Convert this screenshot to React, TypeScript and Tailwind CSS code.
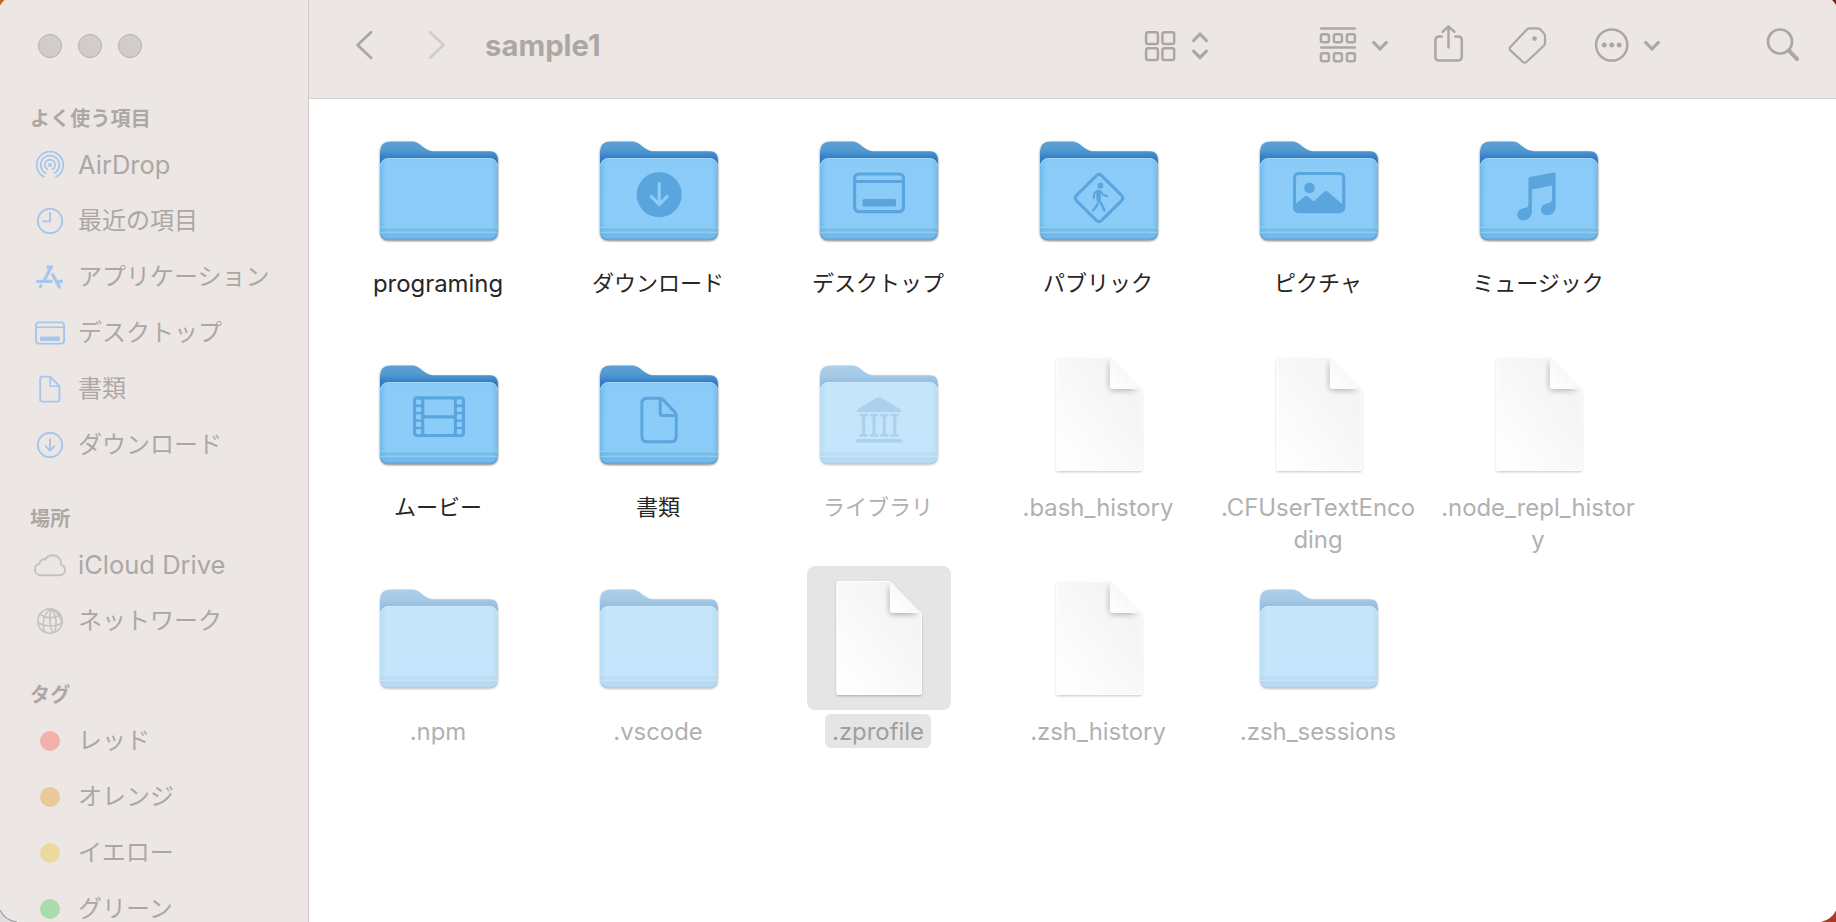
import React from "react";

type Glyph =
  | "none" | "download" | "desktop" | "public" | "pictures"
  | "music" | "movies" | "documents" | "library";

type Entry = {
  kind: "folder" | "file";
  lines: string[];
  glyph?: Glyph;
  hidden?: boolean;
  selected?: boolean;
  latin?: boolean;
};

const entries: Entry[] = [
  { kind: "folder", lines: ["programing"], latin: true },
  { kind: "folder", lines: ["ダウンロード"], glyph: "download" },
  { kind: "folder", lines: ["デスクトップ"], glyph: "desktop" },
  { kind: "folder", lines: ["パブリック"], glyph: "public" },
  { kind: "folder", lines: ["ピクチャ"], glyph: "pictures" },
  { kind: "folder", lines: ["ミュージック"], glyph: "music" },
  { kind: "folder", lines: ["ムービー"], glyph: "movies" },
  { kind: "folder", lines: ["書類"], glyph: "documents" },
  { kind: "folder", lines: ["ライブラリ"], glyph: "library", hidden: true },
  { kind: "file", lines: [".bash_history"], hidden: true, latin: true },
  { kind: "file", lines: [".CFUserTextEnco", "ding"], hidden: true, latin: true },
  { kind: "file", lines: [".node_repl_histor", "y"], hidden: true, latin: true },
  { kind: "folder", lines: [".npm"], hidden: true, latin: true },
  { kind: "folder", lines: [".vscode"], hidden: true, latin: true },
  { kind: "file", lines: [".zprofile"], hidden: true, selected: true, latin: true },
  { kind: "file", lines: [".zsh_history"], hidden: true, latin: true },
  { kind: "folder", lines: [".zsh_sessions"], hidden: true, latin: true },
];

const INK = "#5ba5df";
const FACE = "#8bcdf8";

function FolderGlyph({ glyph }: { glyph: Glyph }) {
  switch (glyph) {
    case "download":
      return (
        <g>
          <circle cx="72.2" cy="76.7" r="22.6" fill={INK} />
          <path d="M72.2 65.5V86.5M64.3 78.5L72.2 86.7L80.1 78.5" fill="none" stroke={FACE} strokeWidth="3.2" strokeLinecap="round" strokeLinejoin="round" />
        </g>
      );
    case "desktop":
      return (
        <g fill="none" stroke={INK} strokeWidth="3.2">
          <rect x="47.6" y="56" width="48.8" height="37.6" rx="4" />
          <path d="M48 63.5H96" strokeWidth="3" />
          <rect x="55.5" y="81" width="33.5" height="7.4" rx="1.5" fill={INK} stroke="none" />
        </g>
      );
    case "public":
      return (
        <g fill="none" stroke={INK} strokeLinecap="round" strokeLinejoin="round">
          <path d="M69.4 57.6Q72 55.2 74.6 57.6L94.6 77.4Q97 80 94.6 82.6L74.6 102.4Q72 104.8 69.4 102.4L49.4 82.6Q47 80 49.4 77.4Z" strokeWidth="3" />
          <circle cx="73.4" cy="67.7" r="3" fill={INK} stroke="none" />
          <path d="M71.2 74L71.6 82.6L74.4 85.8L77.4 92.4" strokeWidth="2.6" />
          <path d="M71.6 74V82" strokeWidth="4.6" />
          <path d="M70.4 86L69.4 88.4L66 92.4" strokeWidth="2.4" />
          <path d="M71 72.6L67.6 74.8L66.6 80.2M74 73.4L76 76.8L80.4 78" strokeWidth="2" />
        </g>
      );
    case "pictures":
      return (
        <g>
          <rect x="47.5" y="55.5" width="49.2" height="38.2" rx="4" fill="none" stroke={INK} strokeWidth="3.1" />
          <circle cx="62.5" cy="69.8" r="5.3" fill={INK} />
          <path d="M48 86.6L57.4 78.6Q59 77.2 60.6 78.6L66.8 83.6L77.2 73.8Q79 72.2 80.8 73.8L96 86.8V93H48Z" fill={INK} />
        </g>
      );
    case "music":
      return (
        <path
          d="M61.4 61.2Q61.4 59.4 63.2 59L86.4 54.5Q88.6 54.1 88.6 56.4V88.6C88.6 93.6 85 97.2 80 97.2C76.4 97.2 73.9 94.8 73.9 91.6C73.9 88.2 76.6 86 80.4 85.4C83.6 84.9 85 84 85 81.6V67.4L64.9 71.4V93.4C64.9 98.4 61.2 102.2 56.4 102.2C52.8 102.2 50.3 99.8 50.3 96.4C50.3 93 53 90.8 56.8 90.2C60 89.7 61.4 88.8 61.4 86.4Z"
          fill={INK}
        />
      );
    case "movies":
      return (
        <g>
          <rect x="46" y="54.3" width="52" height="40.8" rx="4" fill={INK} />
          {[57.4, 64.9, 72.3, 79.7, 87].map((y) => (
            <g key={y} fill={FACE}>
              <rect x="49" y={y} width="5.2" height="5.2" rx="1.4" />
              <rect x="89.8" y={y} width="5.2" height="5.2" rx="1.4" />
            </g>
          ))}
          <rect x="57.3" y="57.6" width="29.6" height="15.6" rx="1" fill={FACE} />
          <rect x="57.3" y="76.4" width="29.6" height="15.6" rx="1" fill={FACE} />
        </g>
      );
    case "documents":
      return (
        <path
          d="M60 56.2H72.6Q74.6 56.2 76 57.6L88 70.4Q89.2 71.8 89.2 73.6V94.6Q89.2 99.8 84 99.8H60Q54.9 99.8 54.9 94.6V61.4Q54.9 56.2 60 56.2ZM73.2 56.4V71Q73.2 73.6 75.8 73.6H89"
          fill="none" stroke={INK} strokeWidth="3" strokeLinejoin="round"
        />
      );
    case "library":
      return (
        <g fill={INK}>
          <path d="M51 67.2L70 55.6Q72 54.4 74 55.6L93.2 67.2Q95.4 69.8 92.6 69.9H51.6Q48.8 69.8 51 67.2Z" />
          {[56.6, 67, 77.4, 87.8].map((x) => (
            <g key={x}>
              <rect x={x - 4.3} y="71.7" width="8.6" height="2.8" rx="1.4" />
              <rect x={x - 1.6} y="72.6" width="3.2" height="21" />
              <rect x={x - 4.3} y="92" width="8.6" height="2.8" rx="1.4" />
            </g>
          ))}
          <rect x="48.6" y="97" width="47" height="3.4" rx="1.7" />
        </g>
      );
    default:
      return null;
  }
}

function Folder({ glyph, faded }: { glyph: Glyph; faded: boolean }) {
  return (
    <svg viewBox="0 0 144 144" className={faded ? "size-36 opacity-50" : "size-36"}>
      <path d="M13 34Q13 23.4 23 23.4H45C54 23.4 56 33.2 68 33.2H123Q131 33.2 131 42V113Q131 122 122 122H22Q13 122 13 113Z" fill="url(#folderBack)" filter="url(#folderShadow)" />
      <rect x="13" y="40" width="118" height="82" rx="9" fill="url(#folderFront)" />
      <rect x="13" y="40" width="118" height="82" rx="9" fill="url(#folderSides)" />
      <path d="M13.6 48Q14.4 40.5 22 40.5H122Q129.6 40.5 130.4 48" fill="none" stroke="#a3d8f8" strokeWidth="0.9" />
      <path d="M13 109.2H131M13 114.6H131" stroke="#93cff5" strokeWidth="0.8" />
      <path d="M13 111.5H131M13 116.5H131" stroke="#6fb6e3" strokeWidth="1" />
      <FolderGlyph glyph={glyph} />
    </svg>
  );
}

function Document({ faded }: { faded: boolean }) {
  return (
    <svg viewBox="0 0 144 144" className={faded ? "size-36 opacity-90" : "size-36"}>
      <path d="M31.6 15H83L114.9 48V126.8Q114.9 129 112.8 129H31.6Q29.4 129 29.4 126.8V17.2Q29.4 15 31.6 15Z" fill="url(#paper)" filter="url(#paperShadow)" />
      <path d="M32 15.5H83L114.4 48.2V126.4Q114.4 128.4 112.4 128.4H32Q30 128.4 30 126.4V17.4Q30 15.5 32 15.5Z" fill="none" stroke="#ffffff" strokeWidth="1" />
      <g clipPath="url(#paperClip)">
        <path d="M82.8 19V44.6Q82.8 48 86 48H110Z" fill="#000000" opacity="0.36" filter="url(#foldBlur)" />
      </g>
      <path d="M82.8 15V44Q82.8 47 86 47H114.2Z" fill="url(#fold)" />
    </svg>
  );
}

function Defs() {
  return (
    <svg className="absolute size-0" aria-hidden="true">
      <defs>
        <linearGradient id="folderBack" gradientUnits="userSpaceOnUse" x1="0" y1="23" x2="0" y2="44">
          <stop offset="0" stopColor="#5ca2d5" />
          <stop offset="0.45" stopColor="#5099d0" />
          <stop offset="0.85" stopColor="#2f7cc6" />
          <stop offset="1" stopColor="#2f7cc6" />
        </linearGradient>
        <linearGradient id="folderFront" x1="0" y1="0" x2="0" y2="1">
          <stop offset="0" stopColor="#85c9f5" />
          <stop offset="0.06" stopColor="#8accf7" />
          <stop offset="0.82" stopColor="#8bcdf8" />
          <stop offset="0.88" stopColor="#7fc3ef" />
          <stop offset="0.97" stopColor="#72b8e8" />
          <stop offset="1" stopColor="#5ea6d8" />
        </linearGradient>
        <linearGradient id="folderSides" x1="0" y1="0" x2="1" y2="0">
          <stop offset="0" stopColor="#5aa8dc" stopOpacity="0.55" />
          <stop offset="0.06" stopColor="#6db8e8" stopOpacity="0" />
          <stop offset="0.94" stopColor="#6db8e8" stopOpacity="0" />
          <stop offset="1" stopColor="#5aa8dc" stopOpacity="0.55" />
        </linearGradient>
        <filter id="folderShadow" x="-10%" y="-10%" width="120%" height="120%">
          <feDropShadow dx="0" dy="1" stdDeviation="1" floodColor="#000000" floodOpacity="0.5" />
        </filter>
        <linearGradient id="paper" x1="1" y1="0.1" x2="0.1" y2="1">
          <stop offset="0" stopColor="#f3f3f3" />
          <stop offset="0.35" stopColor="#f6f6f6" />
          <stop offset="1" stopColor="#ffffff" />
        </linearGradient>
        <linearGradient id="fold" x1="0.1" y1="0.9" x2="0.6" y2="0.4">
          <stop offset="0" stopColor="#ffffff" />
          <stop offset="1" stopColor="#f6f6f6" />
        </linearGradient>
        <filter id="paperShadow" x="-10%" y="-10%" width="120%" height="120%">
          <feDropShadow dx="0" dy="1.2" stdDeviation="0.8" floodColor="#000000" floodOpacity="0.24" />
        </filter>
        <filter id="foldBlur" x="-60%" y="-60%" width="220%" height="220%">
          <feGaussianBlur stdDeviation="3" />
        </filter>
        <clipPath id="paperClip">
          <path d="M30 15.5H83L114.4 48V128.4H30Z" />
        </clipPath>
      </defs>
    </svg>
  );
}

function GridItem({ entry }: { entry: Entry }) {
  const hidden = !!entry.hidden;
  return (
    <div className="flex h-56 w-[220px] flex-col items-center">
      <div className={entry.selected ? "size-36 rounded-lg bg-[#e5e5e5]" : "size-36"}>
        {entry.kind === "folder" ? (
          <Folder glyph={entry.glyph ?? "none"} faded={hidden} />
        ) : (
          <Document faded={hidden && !entry.selected} />
        )}
      </div>
      <div
        className={
          "mt-1 mr-[2px] flex flex-col items-center whitespace-nowrap rounded-md leading-8 " +
          (entry.latin ? "px-[7px] pt-[2px] text-[23.9px] " : "px-[6px] pt-px text-[22px] ") +
          (entry.selected ? "bg-[#e5e5e5] text-[#9f9f9f]" : hidden ? "text-[#b1b1b1]" : "text-[#262626]")
        }
      >
        {entry.lines.map((line) => (
          <span key={line}>{line}</span>
        ))}
      </div>
    </div>
  );
}

const BLUE = "#a6c6ec";
const GREY = "#c6c1be";

function Icon({ children, color = BLUE }: { children: React.ReactNode; color?: string }) {
  return (
    <svg viewBox="0 0 32 32" className="size-8 shrink-0" fill="none" stroke={color} strokeWidth="1.9" strokeLinecap="round" strokeLinejoin="round">
      {children}
    </svg>
  );
}

const favourites: { label: string; icon: React.ReactNode; latin?: boolean }[] = [
  {
    label: "AirDrop",
    latin: true,
    icon: (
      <Icon>
        <g strokeWidth="1.7">
          <circle cx="16" cy="16" r="2" fill={BLUE} stroke="none" />
          <path d="M13.2 20.3A5.2 5.2 0 1 1 18.8 20.3" />
          <path d="M11.7 24.1A9.3 9.3 0 1 1 20.3 24.1" />
          <path d="M9.9 27.8A13.3 13.3 0 1 1 22.1 27.8" />
        </g>
      </Icon>
    ),
  },
  {
    label: "最近の項目",
    icon: (
      <Icon>
        <circle cx="16" cy="16" r="12.2" />
        <path d="M16 7.8V16.4H9.2" />
      </Icon>
    ),
  },
  {
    label: "アプリケーション",
    icon: (
      <Icon>
        <g strokeWidth="3.2">
          <path d="M17.6 5.6L10.6 18.6M14 5.6L15.8 8.6" />
          <path d="M3.4 20.4H17.2M24.6 20.4H27.4" />
          <path d="M18.6 13.6L25.4 26" />
          <path d="M6.9 24.8L6.4 25.6" />
        </g>
      </Icon>
    ),
  },
  {
    label: "デスクトップ",
    icon: (
      <Icon>
        <rect x="1.9" y="5.4" width="28.2" height="21.2" rx="3" />
        <path d="M2 10.2H30" strokeWidth="1.5" />
        <rect x="6" y="19.6" width="20" height="4.4" rx="1" fill={BLUE} stroke="none" />
      </Icon>
    ),
  },
  {
    label: "書類",
    icon: (
      <Icon>
        <path d="M8.6 3.6H16L25.4 13V26.4Q25.4 28.6 23.2 28.6H8.6Q6.2 28.6 6.2 26.4V5.8Q6.2 3.6 8.6 3.6Z" />
        <path d="M16.2 4V13.2H25.2" strokeWidth="1.5" />
      </Icon>
    ),
  },
  {
    label: "ダウンロード",
    icon: (
      <Icon>
        <circle cx="16" cy="16" r="12.2" />
        <path d="M16 10.2V21.4M11.6 17.2L16 21.6L20.4 17.2" />
      </Icon>
    ),
  },
];

const places: { label: string; icon: React.ReactNode; latin?: boolean }[] = [
  {
    label: "iCloud Drive",
    latin: true,
    icon: (
      <Icon color={GREY}>
        <path d="M7.2 26.2C3.6 26.2 1 23.8 1 20.4C1 17.6 2.8 15.4 5.5 14.9C5.5 11.6 8.4 9.7 11.2 10.5C12.6 7.9 15.4 6.2 18.6 6.2C23.4 6.2 27.2 10 27.2 14.8V15.8C29.4 16.4 31 18.4 31 20.7C31 23.8 28.6 26.2 25.4 26.2Z" />
      </Icon>
    ),
  },
  {
    label: "ネットワーク",
    icon: (
      <Icon color={GREY}>
        <g strokeWidth="1.5">
          <circle cx="16" cy="16" r="12.2" />
          <path d="M17.4 4C22 9 23.6 19.4 20.4 27.2M17.4 4C8.6 8 8 20 11 27M17.4 4C15 10 15.4 22 19 27.6M17.4 4C22.6 6.4 26.6 11 27.8 17" />
          <path d="M6 9.4C12 13.6 20 14 26.4 10M4 17.6C10 21.6 21 22.2 28 17.8" />
        </g>
      </Icon>
    ),
  },
];

const tags = [
  { label: "レッド", dot: "bg-[#f3b1ad]" },
  { label: "オレンジ", dot: "bg-[#ebc79c]" },
  { label: "イエロー", dot: "bg-[#ecd99e]" },
  { label: "グリーン", dot: "bg-[#abdaad]" },
];

function Row({ icon, label, latin }: { icon: React.ReactNode; label: string; latin?: boolean }) {
  return (
    <li className="flex h-14 items-center gap-[12px] pl-[34px]">
      {icon}
      <span className={latin ? "text-[25.5px] leading-8" : "text-[24px] leading-8"}>{label}</span>
    </li>
  );
}

function Section({ title, children }: { title: string; children: React.ReactNode }) {
  return (
    <section className="mb-[26px] shrink-0">
      <h2 className="flex h-[38px] items-center pt-[2px] pl-[30px] text-[20px] font-bold tracking-[0.15px]">{title}</h2>
      <ul>{children}</ul>
    </section>
  );
}

function Sidebar() {
  return (
    <aside className="flex w-[309px] shrink-0 flex-col overflow-hidden border-r border-[#cfcac8] bg-[#ece7e4] text-[#aca7a4]">
      <div className="flex h-[99px] shrink-0 gap-4 pt-[34px] pl-[38px]">
        <span className="size-6 rounded-full border border-[#b3aeab] bg-[#d2cdca]" />
        <span className="size-6 rounded-full border border-[#b3aeab] bg-[#d2cdca]" />
        <span className="size-6 rounded-full border border-[#b3aeab] bg-[#d2cdca]" />
      </div>
      <Section title="よく使う項目">
        {favourites.map((f) => <Row key={f.label} {...f} />)}
      </Section>
      <Section title="場所">
        {places.map((p) => <Row key={p.label} {...p} />)}
      </Section>
      <Section title="タグ">
        {tags.map((t) => (
          <Row
            key={t.label}
            label={t.label}
            icon={
              <span className="flex size-8 items-center justify-center">
                <span className={"size-5 rounded-full " + t.dot} />
              </span>
            }
          />
        ))}
      </Section>
    </aside>
  );
}

function Tool({ children, className }: { children: React.ReactNode; className: string }) {
  return (
    <svg className={"h-10 shrink-0 " + className} fill="none" stroke="#aca7a4" strokeWidth="2.5" strokeLinecap="round" strokeLinejoin="round">
      {children}
    </svg>
  );
}

function Toolbar() {
  return (
    <header className="flex h-[99px] shrink-0 items-start border-b border-[#d5d1cf] bg-[#ece7e4] pt-[25px] pl-[45px] text-[#aca7a4]">
      <Tool className="w-5"><path d="M17 7.3L3.6 20L17 32.8" strokeWidth="2.8" /></Tool>
      <Tool className="ml-[53px] w-5"><path d="M3.2 7.3L16.6 20L3.2 32.8" strokeWidth="2.8" stroke="#d2cdca" /></Tool>
      <h1 className="ml-[38px] text-[29.3px] font-bold leading-[41px]">sample1</h1>
      <div className="ml-auto flex pr-[36px]">
        <Tool className="w-8">
          <rect x="2.1" y="7.2" width="11.8" height="11.8" rx="2" />
          <rect x="18.4" y="7.2" width="11.8" height="11.8" rx="2" />
          <rect x="2.1" y="23.2" width="11.8" height="11.8" rx="2" />
          <rect x="18.4" y="23.2" width="11.8" height="11.8" rx="2" />
        </Tool>
        <Tool className="ml-[14px] w-5">
          <path d="M3.6 15.6L10 9L16.4 15.6M3.6 26.2L10 32.6L16.4 26.2" strokeWidth="3.2" />
        </Tool>
        <Tool className="ml-[109px] w-10">
          <path d="M2.2 3.6H35.8M2.2 22.4H35.8" />
          {[1.9, 14.9, 27.9].map((x) => (
            <g key={x}>
              <rect x={x} y="9.2" width="8" height="8" rx="1.8" />
              <rect x={x} y="28.2" width="8" height="8" rx="1.8" />
            </g>
          ))}
        </Tool>
        <Tool className="ml-[11px] w-5"><path d="M3.6 17.4L10 24L16.4 17.4" strokeWidth="3.2" /></Tool>
        <Tool className="ml-[43px] w-8">
          <path d="M8.6 11.6H6.4Q2.4 11.6 2.4 15.6V31.4Q2.4 35.6 6.6 35.6H24.6Q28.8 35.6 28.8 31.4V15.6Q28.8 11.6 24.8 11.6H22.4" />
          <path d="M15.5 22.6V2M9.6 6.8L15.5 1.4L21.4 6.8" />
        </Tool>
        <Tool className="ml-[43px] w-10">
          <path d="M18.8 4.6Q20.2 3.4 22 3.4H29.6Q31.2 3.4 32.4 4.6L36 8.6Q37 9.8 37 11.2V18Q37 19.6 35.8 20.8L18.4 37Q16.6 38.4 15 37L2.4 25.4Q1 23.8 2.4 22Z" strokeWidth="2.2" />
          <circle cx="26.6" cy="13.6" r="2.3" fill="#aca7a4" stroke="none" />
        </Tool>
        <Tool className="ml-[46px] w-9">
          <circle cx="17.7" cy="20" r="15.6" />
          <g fill="#aca7a4" stroke="none">
            <circle cx="10.2" cy="20" r="2.5" />
            <circle cx="17.7" cy="20" r="2.5" />
            <circle cx="25.2" cy="20" r="2.5" />
          </g>
        </Tool>
        <Tool className="ml-[12px] w-5"><path d="M3.6 17.4L10 24L16.4 17.4" strokeWidth="3.2" /></Tool>
        <Tool className="ml-[102px] w-9">
          <circle cx="16" cy="16.5" r="12" strokeWidth="2.7" />
          <path d="M25 25.6L33 34" strokeWidth="4" />
        </Tool>
      </div>
    </header>
  );
}

export default function App() {
  return (
    <div className="relative flex h-[922px] w-[1836px] overflow-hidden bg-[#ece7e4] font-['Inter','Noto_Sans_CJK_JP',sans-serif]">
      <Defs />
      <Sidebar />
      <div className="flex min-w-0 flex-1 flex-col bg-white">
        <Toolbar />
        <main className="grid grid-cols-[repeat(6,220px)] pt-[19px] pl-[20px]">
          {entries.map((e) => <GridItem key={e.lines[0]} entry={e} />)}
        </main>
      </div>
      <svg className="absolute top-0 left-0 size-5"><path d="M0 0H4.6Q2 2 0 5.4Z" fill="#c8641c" /></svg>
      <svg className="absolute top-0 right-0 size-5"><path d="M20 0H16Q18.4 2 20 5Z" fill="#7a2020" /></svg>
      <svg className="absolute bottom-0 left-0 size-5">
        <path d="M0 8Q4.5 18 17 20H0Z" fill="#dedede" />
        <path d="M0 8Q4.5 18 17 20" fill="none" stroke="#a8a5a3" strokeWidth="1.2" />
      </svg>
      <svg className="absolute right-0 bottom-0 size-5"><path d="M20 8.5Q15.5 17.5 5 20H20Z" fill="#a83a26" /></svg>
    </div>
  );
}
